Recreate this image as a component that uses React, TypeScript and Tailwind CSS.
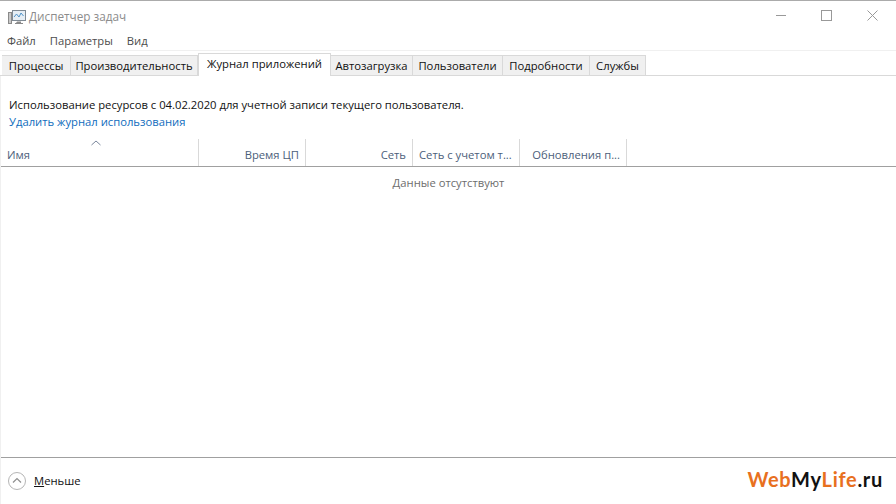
import React from 'react';

const tabs = [
  { label: 'Процессы', w: 'w-[69px]' },
  { label: 'Производительность', w: 'w-[127px]' },
  { label: 'Журнал приложений', w: 'w-[133px]', active: true },
  { label: 'Автозагрузка', w: 'w-[82px]' },
  { label: 'Пользователи', w: 'w-[90px]' },
  { label: 'Подробности', w: 'w-[87px]' },
  { label: 'Службы', w: 'w-[56px]' },
];

const columns = [
  { label: 'Время ЦП', w: 'w-[107px]', align: 'justify-end pr-[6px]' },
  { label: 'Сеть', w: 'w-[107px]', align: 'justify-end pr-[6px]' },
  { label: 'Сеть с учетом т...', w: 'w-[107px]', align: 'justify-start pl-[6px]' },
  { label: 'Обновления п...', w: 'w-[107px]', align: 'justify-end pr-[6px]' },
];

const TaskIcon = () => (
  <svg width="18" height="16" viewBox="0 0 18 16" fill="none">
    <rect x="0.5" y="3.5" width="3" height="11" fill="#c9c9c9" stroke="#8a8a8a" />
    <rect x="4.5" y="1.5" width="13" height="10" fill="#e6eef5" stroke="#7f8a94" />
    <path d="M6 8l2.5-3 2.5 3 2-4 2.5 3" stroke="#4f93c9" strokeWidth="1" />
    <path d="M9 12.5h4v1.5H8z" fill="#8a8a8a" />
    <path d="M7 14.5h8" stroke="#8a8a8a" />
  </svg>
);

export default function App() {
  return (
    <div className="w-[896px] h-[504px] bg-white flex flex-col overflow-hidden font-['Open_Sans','Noto_Sans',sans-serif] text-[11.25px] text-[#111] border-t border-[#ababab]">
      {/* Title bar */}
      <div className="h-[31px] shrink-0 flex items-center">
        <div className="ml-[8px] mr-[3px] flex items-center"><TaskIcon /></div>
        <span className="text-[11.75px] text-[#8c8c8c]">Диспетчер задач</span>
        <div className="ml-auto flex items-center -mt-[3px]">
          <svg width="11" height="11" viewBox="0 0 11 11" className="mr-[34px]"><path d="M0 5.5h10" stroke="#999" /></svg>
          <svg width="11" height="11" viewBox="0 0 11 11" className="mr-[35px]"><rect x="0.5" y="0.5" width="10" height="10" fill="none" stroke="#999" /></svg>
          <svg width="11" height="11" viewBox="0 0 11 11" className="mr-[18px]"><path d="M0.5 0.5l10 10M10.5 0.5l-10 10" stroke="#999" /></svg>
        </div>
      </div>

      {/* Menu */}
      <div className="h-[19px] shrink-0 flex items-center pl-[7px] gap-[14px] text-[#4d4d4d] border-b border-[#f0f0f0]">
        <span>Файл</span>
        <span>Параметры</span>
        <span>Вид</span>
      </div>

      {/* Tabs */}
      <div className="h-[23px] shrink-0 mt-[2px] flex items-end pl-[2px] border-b border-[#d9d9d9]">
        {tabs.map((t) => (
          <div
            key={t.label}
            className={
              t.active
                ? `${t.w} h-[23px] -mb-px pb-[2px] bg-white border border-b-0 border-[#d9d9d9] flex items-center justify-center whitespace-nowrap`
                : `${t.w} h-[20px] pt-[1px] bg-[#f0f0f0] border-t border-r border-[#d9d9d9] flex items-center justify-center whitespace-nowrap`
            }
          >
            {t.label}
          </div>
        ))}
      </div>

      {/* Content */}
      <div className="flex-1 flex flex-col border-l border-[#f0f0f0] min-h-0">
        <div className="pt-[20px] pl-[8px] h-[63px] shrink-0 leading-[17px]">
          <div className="text-[#111]">Использование ресурсов с 04.02.2020 для учетной записи текущего пользователя.</div>
          <div className="text-[#0f6cbd]">Удалить журнал использования</div>
        </div>

        {/* Table header */}
        <div className="h-[28px] shrink-0 flex border-b border-[#a0a0a0] text-[#4c607a]">
          <div className="relative w-[198px] border-r border-[#d9d9d9] flex items-end pl-[6px] pb-[2px]">
            <svg width="10" height="6" viewBox="0 0 10 6" className="absolute left-[90px] top-[1px]">
              <path d="M0.5 5l4.5-4 4.5 4" fill="none" stroke="#7a869c" />
            </svg>
            <span>Имя</span>
          </div>
          {columns.map((c) => (
            <div key={c.label} className={`${c.w} border-r border-[#d9d9d9] flex items-end pb-[2px] whitespace-nowrap ${c.align}`}>
              {c.label}
            </div>
          ))}
        </div>

        <div className="flex-1 pt-[8px] text-center text-[#6d6d6d]">Данные отсутствуют</div>

        {/* Footer */}
        <div className="h-[47px] shrink-0 border-t border-[#a0a0a0] flex items-center pl-[7px] pr-[13px]">
          <svg width="18" height="18" viewBox="0 0 18 18" fill="none">
            <circle cx="9" cy="9" r="8.5" stroke="#b5b5b5" />
            <path d="M5 10.5l4-4 4 4" stroke="#8f8f8f" strokeWidth="1.2" />
          </svg>
          <span className="ml-[8px] text-[#111]"><span className="underline">М</span>еньше</span>
          <div className="ml-auto -mt-[5px] font-['Lato',sans-serif] font-bold text-[20px] leading-none tracking-[0.7px]">
            <span className="text-[#e8701f]">Web</span>
            <span className="text-[#111]">My</span>
            <span className="text-[#e8701f]">Life</span>
            <span className="text-[#111]">.ru</span>
          </div>
        </div>
      </div>
    </div>
  );
}
